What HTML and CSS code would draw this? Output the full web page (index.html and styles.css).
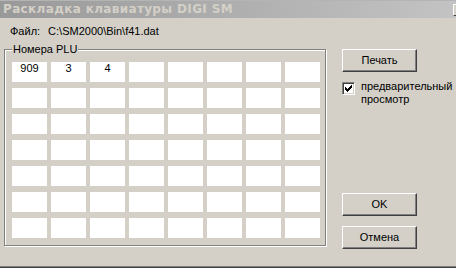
FILE: index.html
```html
<!DOCTYPE html>
<html lang="ru">
<head>
    <meta charset="UTF-8">
    <meta name="viewport" content="width=device-width, initial-scale=1.0">
    <title>Раскладка клавиатуры DIGI SM</title>
    <link rel="stylesheet" href="styles.css">
</head>
<body>
<div class="window">
    <div class="titlebar">
        <span class="title">Раскладка клавиатуры DIGI SM</span>
        <span class="tbtn"></span>
    </div>

    <div class="client">
        <div class="leftcol">
            <p class="file"><span class="flabel">Файл:</span><span>C:\SM2000\Bin\f41.dat</span></p>

            <fieldset class="group">
                <legend>Номера PLU</legend>
                <div class="grid">
                    <div class="cell">909</div><div class="cell">3</div><div class="cell">4</div><div class="cell"></div>
                    <div class="cell"></div><div class="cell"></div><div class="cell"></div><div class="cell"></div>

                    <div class="cell"></div><div class="cell"></div><div class="cell"></div><div class="cell"></div>
                    <div class="cell"></div><div class="cell"></div><div class="cell"></div><div class="cell"></div>

                    <div class="cell"></div><div class="cell"></div><div class="cell"></div><div class="cell"></div>
                    <div class="cell"></div><div class="cell"></div><div class="cell"></div><div class="cell"></div>

                    <div class="cell"></div><div class="cell"></div><div class="cell"></div><div class="cell"></div>
                    <div class="cell"></div><div class="cell"></div><div class="cell"></div><div class="cell"></div>

                    <div class="cell"></div><div class="cell"></div><div class="cell"></div><div class="cell"></div>
                    <div class="cell"></div><div class="cell"></div><div class="cell"></div><div class="cell"></div>

                    <div class="cell"></div><div class="cell"></div><div class="cell"></div><div class="cell"></div>
                    <div class="cell"></div><div class="cell"></div><div class="cell"></div><div class="cell"></div>

                    <div class="cell"></div><div class="cell"></div><div class="cell"></div><div class="cell"></div>
                    <div class="cell"></div><div class="cell"></div><div class="cell"></div><div class="cell"></div>
                </div>
            </fieldset>
        </div>

        <div class="rightcol">
            <button class="btn">Печать</button>

            <label class="check">
                <span class="box">
                    <svg width="7" height="7" viewBox="0 0 7 7" shape-rendering="crispEdges">
                        <path d="M0 2h1v3H0z M1 3h1v3H1z M2 4h1v3H2z M3 3h1v3H3z M4 2h1v3H4z M5 1h1v3H5z M6 0h1v3H6z" fill="#000"/>
                    </svg>
                </span>
                <span class="ctext">предварительный<br>просмотр</span>
            </label>

            <div class="bottombtns">
                <button class="btn">OK</button>
                <button class="btn">Отмена</button>
            </div>
        </div>
    </div>
</div>
</body>
</html>
```

FILE: styles.css
```css
* {
    margin: 0;
    padding: 0;
    box-sizing: border-box;
}

body {
    background: #d4d0c8;
    font-family: Tahoma, "Liberation Sans", sans-serif;
    font-size: 11px;
    line-height: 13px;
    color: #000;
}

.window {
    display: flex;
    flex-direction: column;
    width: 456px;
    height: 268px;
    overflow: hidden;
    border-bottom: 1px solid #404040;
    box-shadow: inset 0 -1px 0 #808080;
}

/* inactive caption */
.titlebar {
    display: flex;
    align-items: center;
    justify-content: space-between;
    height: 18px;
    padding-left: 3px;
    background: linear-gradient(to right, #999, #c3c3c3);
    border-top: 1px solid #b4b4b4;
}

.title {
    font-family: "DejaVu Sans", sans-serif;
    font-size: 12px;
    font-weight: bold;
    letter-spacing: 0.35px;
    color: #d4d0c8;
}

.tbtn {
    width: 16px;
    height: 12px;
    margin-right: -13px;
    background: #d4d0c8;
    border: 1px solid;
    border-color: #fff #404040 #404040 #fff;
}

.client {
    flex: 1;
    display: flex;
    gap: 16px;
}

.leftcol {
    padding: 7px 0 0 4px;
}

.file {
    padding-left: 6px;
    margin-bottom: 5px;
}

.flabel {
    margin-right: 8px;
}

.group {
    width: 322px;
    padding: 6px 5px 7px 7px;
    border: 1px solid #808080;
    box-shadow: 1px 1px 0 #fff, inset 1px 1px 0 #fff;
    min-inline-size: 0;
}

.group legend {
    padding: 0 1px;
    background: #d4d0c8;
}

.grid {
    display: grid;
    grid-template-columns: repeat(8, 35px);
    grid-auto-rows: 20px;
    column-gap: 4px;
    row-gap: 6px;
}

.cell {
    background: #fff;
    text-align: center;
}

.rightcol {
    display: flex;
    flex-direction: column;
    padding: 31px 0 18px 0;
}

.btn {
    display: block;
    width: 75px;
    height: 23px;
    font: inherit;
    color: #000;
    background: #d4d0c8;
    border: 1px solid;
    border-color: #fff #404040 #404040 #fff;
    box-shadow: inset -1px -1px 0 #808080;
}

.check {
    display: flex;
    align-items: flex-start;
    gap: 6px;
    margin-top: 8px;
}

.box {
    display: flex;
    align-items: center;
    justify-content: center;
    flex: none;
    width: 13px;
    height: 13px;
    margin-top: 2px;
    background: #fff;
    border: 1px solid;
    border-color: #808080 #fff #fff #808080;
    box-shadow: inset 1px 1px 0 #404040, inset -1px -1px 0 #d4d0c8;
}

.bottombtns {
    display: flex;
    flex-direction: column;
    gap: 10px;
    margin-top: auto;
}
```
